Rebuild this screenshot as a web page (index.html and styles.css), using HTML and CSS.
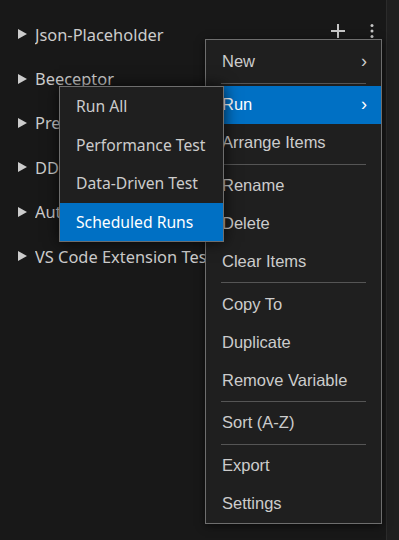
FILE: index.html
```html
<!DOCTYPE html>
<html lang="en">
<head>
	<meta charset="UTF-8">
	<meta name="viewport" content="width=device-width, initial-scale=1.0">
	<title>Collections</title>
	<link rel="stylesheet" href="styles.css">
</head>
<body>
	<div class="workbench">
		<div class="sidebar">
			<div class="tree">
				<div class="tree-row">
					<span class="twisty"></span>
					<span class="tree-label">Json-Placeholder</span>
					<div class="row-actions">
						<svg class="action-icon" width="16" height="16" viewBox="0 0 16 16">
							<path d="M8 1v14M1 8h14" stroke="#c5c5c5" stroke-width="2" fill="none"/>
						</svg>
						<svg class="action-icon" width="16" height="16" viewBox="0 0 16 16">
							<circle cx="8" cy="2.5" r="1.5" fill="#c5c5c5"/>
							<circle cx="8" cy="8" r="1.5" fill="#c5c5c5"/>
							<circle cx="8" cy="13.5" r="1.5" fill="#c5c5c5"/>
						</svg>
					</div>
				</div>
				<div class="tree-row">
					<span class="twisty"></span>
					<span class="tree-label">Beeceptor</span>
				</div>
				<div class="tree-row">
					<span class="twisty"></span>
					<span class="tree-label">Pre</span>
				</div>
				<div class="tree-row">
					<span class="twisty"></span>
					<span class="tree-label">DD</span>
				</div>
				<div class="tree-row">
					<span class="twisty"></span>
					<span class="tree-label">Aut</span>
				</div>
				<div class="tree-row">
					<span class="twisty"></span>
					<span class="tree-label">VS Code Extension Tests</span>
				</div>
			</div>
		</div>
		<div class="side-strip"></div>
	</div>

	<div class="context-menu">
		<div class="menu-item">New<span class="chevron">›</span></div>
		<div class="menu-separator"></div>
		<div class="menu-item selected">Run<span class="chevron">›</span></div>
		<div class="menu-item">Arrange Items</div>
		<div class="menu-separator"></div>
		<div class="menu-item">Rename</div>
		<div class="menu-item">Delete</div>
		<div class="menu-item">Clear Items</div>
		<div class="menu-separator"></div>
		<div class="menu-item">Copy To</div>
		<div class="menu-item">Duplicate</div>
		<div class="menu-item">Remove Variable</div>
		<div class="menu-separator"></div>
		<div class="menu-item">Sort (A-Z)</div>
		<div class="menu-separator"></div>
		<div class="menu-item">Export</div>
		<div class="menu-item">Settings</div>
	</div>

	<div class="submenu">
		<div class="submenu-item">Run All</div>
		<div class="submenu-item">Performance Test</div>
		<div class="submenu-item">Data-Driven Test</div>
		<div class="submenu-item selected">Scheduled Runs</div>
	</div>
</body>
</html>
```

FILE: styles.css
```css
body {
	margin: 0;
	background-color: #181818;
	color: #cccccc;
	font-family: "Noto Sans", "Open Sans", sans-serif;
	overflow: hidden;
}
.workbench {
	display: flex;
	height: 540px;
}
.sidebar {
	width: 386px;
	background-color: #181818;
}
.side-strip {
	flex: 1;
	background-color: #1f1f1f;
	border-left: 1px solid #2b2b2b;
}
.tree {
	padding-top: 12px;
}
.tree-row {
	display: flex;
	align-items: center;
	height: 44.4px;
	padding-left: 18px;
	padding-right: 6px;
	white-space: nowrap;
	font-size: 16.4px;
}
.twisty {
	width: 0;
	height: 0;
	border-top: 5.5px solid transparent;
	border-bottom: 5.5px solid transparent;
	border-left: 9px solid #cccccc;
	margin-right: 8px;
}
.tree-label {
	flex: 1;
	overflow: hidden;
}
.row-actions {
	display: flex;
	align-items: center;
	gap: 18px;
	margin-bottom: 6px;
}
.action-icon {
	display: block;
}

/* context menu */
.context-menu {
	position: absolute;
	left: 205px;
	top: 39px;
	width: 175px;
	padding-top: 3px;
	background-color: #1f1f1f;
	border: 1px solid #6e6e6e;
	font-family: "Liberation Sans", Arial, sans-serif;
	font-size: 16.5px;
	box-shadow: 0 2px 8px rgba(0, 0, 0, 0.6);
}
.menu-item {
	display: flex;
	align-items: center;
	justify-content: space-between;
	height: 37.9px;
	padding: 0 16px;
	color: #cccccc;
}
.menu-item.selected {
	background-color: #0070c4;
	color: #ffffff;
}
.chevron {
	font-size: 18px;
	margin-right: -2px;
}
.menu-separator {
	height: 1px;
	margin: 2px 15px 2px 15px;
	background-color: #555555;
}

/* submenu */
.submenu {
	position: absolute;
	left: 59px;
	top: 86px;
	width: 163px;
	background-color: #1f1f1f;
	border: 1px solid #6e6e6e;
	font-size: 15.7px;
	box-shadow: 0 0 14px rgba(0, 0, 0, 0.75);
}
.submenu-item {
	display: flex;
	align-items: center;
	height: 38.5px;
	padding: 0 16px;
	white-space: nowrap;
}
.submenu-item.selected {
	background-color: #0070c4;
	color: #ffffff;
}
```
